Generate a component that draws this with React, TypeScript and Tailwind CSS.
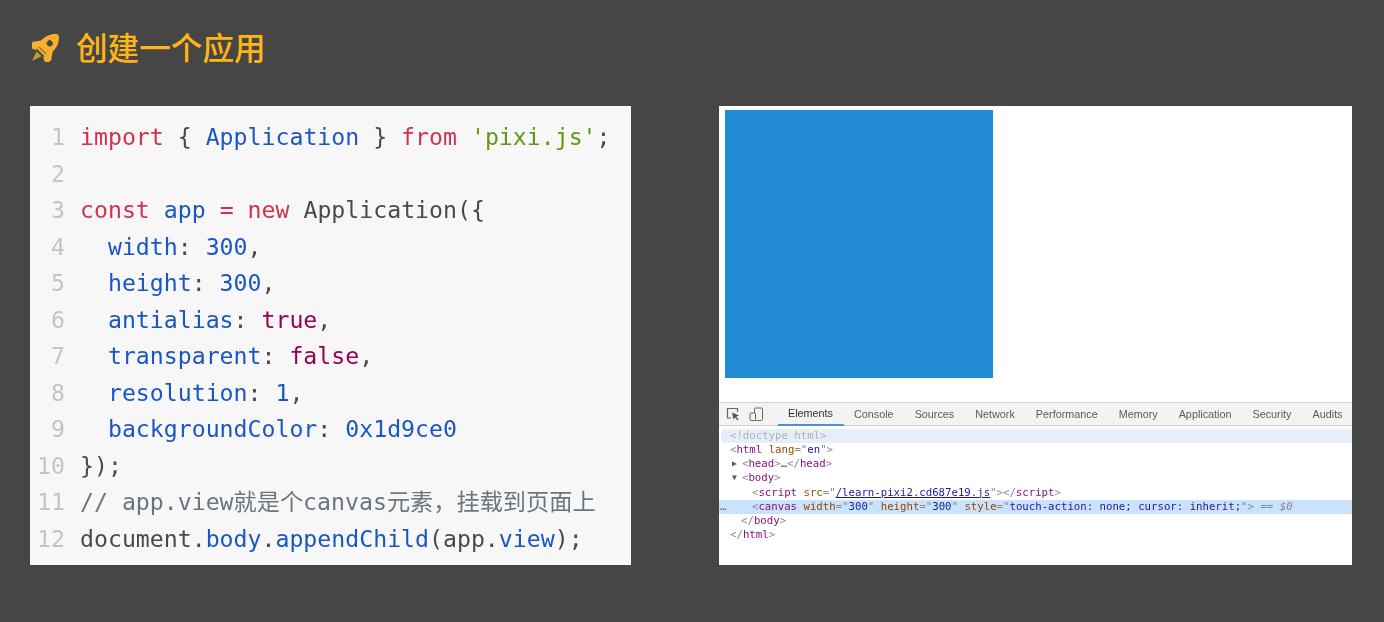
const mono = "font-['DejaVu_Sans_Mono','Noto_Sans_CJK_SC',monospace]";

const K = "text-[#d0324f]"; // keyword red
const B = "text-[#1a56c4]"; // identifiers blue
const V = "text-[#990055]"; // booleans
const G = "text-[#5f9a14]"; // strings
const C = "text-[#6b7580]"; // comment

type Seg = [string, string?];

const code: Seg[][] = [
  [["import", K], [" { "], ["Application", B], [" } "], ["from", K], [" "], ["'pixi.js'", G], [";"]],
  [],
  [["const", K], [" "], ["app", B], [" "], ["=", K], [" "], ["new", K], [" Application({"]],
  [["  "], ["width", B], [": "], ["300", B], [","]],
  [["  "], ["height", B], [": "], ["300", B], [","]],
  [["  "], ["antialias", B], [": "], ["true", V], [","]],
  [["  "], ["transparent", B], [": "], ["false", V], [","]],
  [["  "], ["resolution", B], [": "], ["1", B], [","]],
  [["  "], ["backgroundColor", B], [": "], ["0x1d9ce0", B]],
  [["});"]],
  [["// app.view就是个canvas元素，挂载到页面上", C]],
  [["document."], ["body", B], ["."], ["appendChild", B], ["(app."], ["view", B], [");"]],
];

const tabs = ["Elements", "Console", "Sources", "Network", "Performance", "Memory", "Application", "Security", "Audits"];

const T = "text-[#881280]"; // tag
const A = "text-[#994500]"; // attr
const U = "text-[#1a1aa6]"; // attr value
const P = "text-[#8a8a8a]"; // punctuation

function Rocket() {
  return (
    <svg width="28" height="28" viewBox="0 0 28 28" className="shrink-0">
      <g transform="translate(13.5 13.5) rotate(45)">
        <path d="M0 -18C2 -18 8 -12 8 -3V7H-8V-3C-8 -12 -2 -18 0 -18Z" fill="#f6b02c" />
        <path d="M-8 -2L-13 5L-12.5 12L-5 8.5ZM8 -2L13 5L12.5 12L5 8.5Z" fill="#f6b02c" />
        <path d="M-3.5 9L0 19L3.5 9Z" fill="#c99a3c" />
        <circle cx="0" cy="-6" r="3" fill="#464646" />
        <rect x="-5" y="3.5" width="10" height="1.4" fill="#8d7440" />
      </g>
    </svg>
  );
}

function CodePanel() {
  return (
    <div className={`w-[601px] h-[459px] bg-[#f7f7f7] pt-[13px] text-[23.2px] leading-[36.55px] text-[#4a4a4a] ${mono}`}>
      {code.map((line, i) => (
        <div key={i} className="flex h-[36.55px] whitespace-pre blur-[0.3px]">
          <span className="w-[35px] text-right text-[#c4c4c4] shrink-0">{i + 1}</span>
          <span className="ml-[15px]">
            {line.map(([text, cls], j) => (
              <span key={j} className={cls}>{text}</span>
            ))}
          </span>
        </div>
      ))}
    </div>
  );
}

function DevTools() {
  return (
    <div className="w-[633px] h-[459px] bg-white flex flex-col">
      <div className="h-[296px] shrink-0 pl-[6px] pt-[4px]">
        <div className="w-[268px] h-[268px] bg-[#228bd8]" />
      </div>
      <div className="h-[24px] shrink-0 bg-[#f3f3f3] border-y border-[#d0d0d0] flex items-center blur-[0.3px] font-['Liberation_Sans',sans-serif] text-[10.8px] text-[#5a5a5a]">
        <svg width="14" height="14" viewBox="0 0 14 14" fill="none" className="ml-[7px] shrink-0">
          <path d="M5 11H1.5V1.5H11.5V5" stroke="#666" strokeWidth="1.2" />
          <path d="M6 5.5L13 8.5L10.2 9.8L12.6 12.6L11.6 13.4L9.2 10.6L7.6 12.6Z" fill="#555" />
        </svg>
        <svg width="15" height="15" viewBox="0 0 15 15" fill="none" className="ml-[9px] shrink-0">
          <rect x="5.5" y="1" width="8" height="12.5" rx="1" stroke="#666" />
          <rect x="1" y="6" width="5.5" height="7.5" rx="1" fill="#f3f3f3" stroke="#666" />
        </svg>
        <div className="w-px h-[14px] bg-[#ccc] ml-[8px] mr-[5.5px]" />
        {tabs.map((t) => (
          <div
            key={t}
            className={
              t === "Elements"
                ? "h-[24px] px-[10.5px] pt-[1px] flex items-center text-[#333] border-b-2 border-[#4a90e2]"
                : "h-[24px] px-[10.5px] pt-[1px] flex items-center"
            }
          >
            {t}
          </div>
        ))}
      </div>
      <div className={`pt-[2.5px] text-[10.7px] leading-[14.25px] whitespace-pre blur-[0.3px] ${mono} ${P}`}>
        <div className="bg-[#e6eff9] rounded-l-[3px] ml-[2px] pl-[9px] text-[#b0b0b0]">{"<!doctype html>"}</div>
        <div className="pl-[11px]">
          {"<"}<span className={T}>html</span> <span className={A}>lang</span>{'="'}<span className={U}>en</span>{'">'}
        </div>
        <div className="relative pl-[23px]">
          <span className="absolute left-[13px] text-[8px] text-[#555]">▶</span>
          {"<"}<span className={T}>head</span>{">"}<span className="text-[#333]">…</span>{"</"}<span className={T}>head</span>{">"}
        </div>
        <div className="relative pl-[23px]">
          <span className="absolute left-[13px] text-[8px] text-[#555]">▼</span>
          {"<"}<span className={T}>body</span>{">"}
        </div>
        <div className="pl-[33px]">
          {"<"}<span className={T}>script</span> <span className={A}>src</span>{'="'}<span className="text-[#1a1aa6] underline">/learn-pixi2.cd687e19.js</span>{'"></'}<span className={T}>script</span>{">"}
        </div>
        <div className="relative bg-[#cae2fb] pl-[33px]">
          <span className="absolute left-[1px] text-[#666]">…</span>
          {"<"}<span className={T}>canvas</span> <span className={A}>width</span>{'="'}<span className={U}>300</span>{'"'} <span className={A}>height</span>{'="'}<span className={U}>300</span>{'"'} <span className={A}>style</span>{'="'}<span className={U}>touch-action: none; cursor: inherit;</span>{'">'}{" == "}<span className="italic">$0</span>
        </div>
        <div className="pl-[22px]">
          {"</"}<span className={T}>body</span>{">"}
        </div>
        <div className="pl-[11px]">
          {"</"}<span className={T}>html</span>{">"}
        </div>
      </div>
    </div>
  );
}

export default function App() {
  return (
    <div className="w-[1384px] h-[622px] bg-[#464646] overflow-hidden pl-[30px]">
      <div className="h-[106px] flex items-start pt-[23px]">
        <div className="ml-[2px] mt-[11px]">
          <Rocket />
        </div>
        <h1 className="ml-[16px] text-[31.6px] leading-[46px] font-medium text-[#fdb515] font-['Noto_Sans_CJK_SC',sans-serif]">创建一个应用</h1>
      </div>
      <div className="flex gap-[88px]">
        <CodePanel />
        <DevTools />
      </div>
    </div>
  );
}
